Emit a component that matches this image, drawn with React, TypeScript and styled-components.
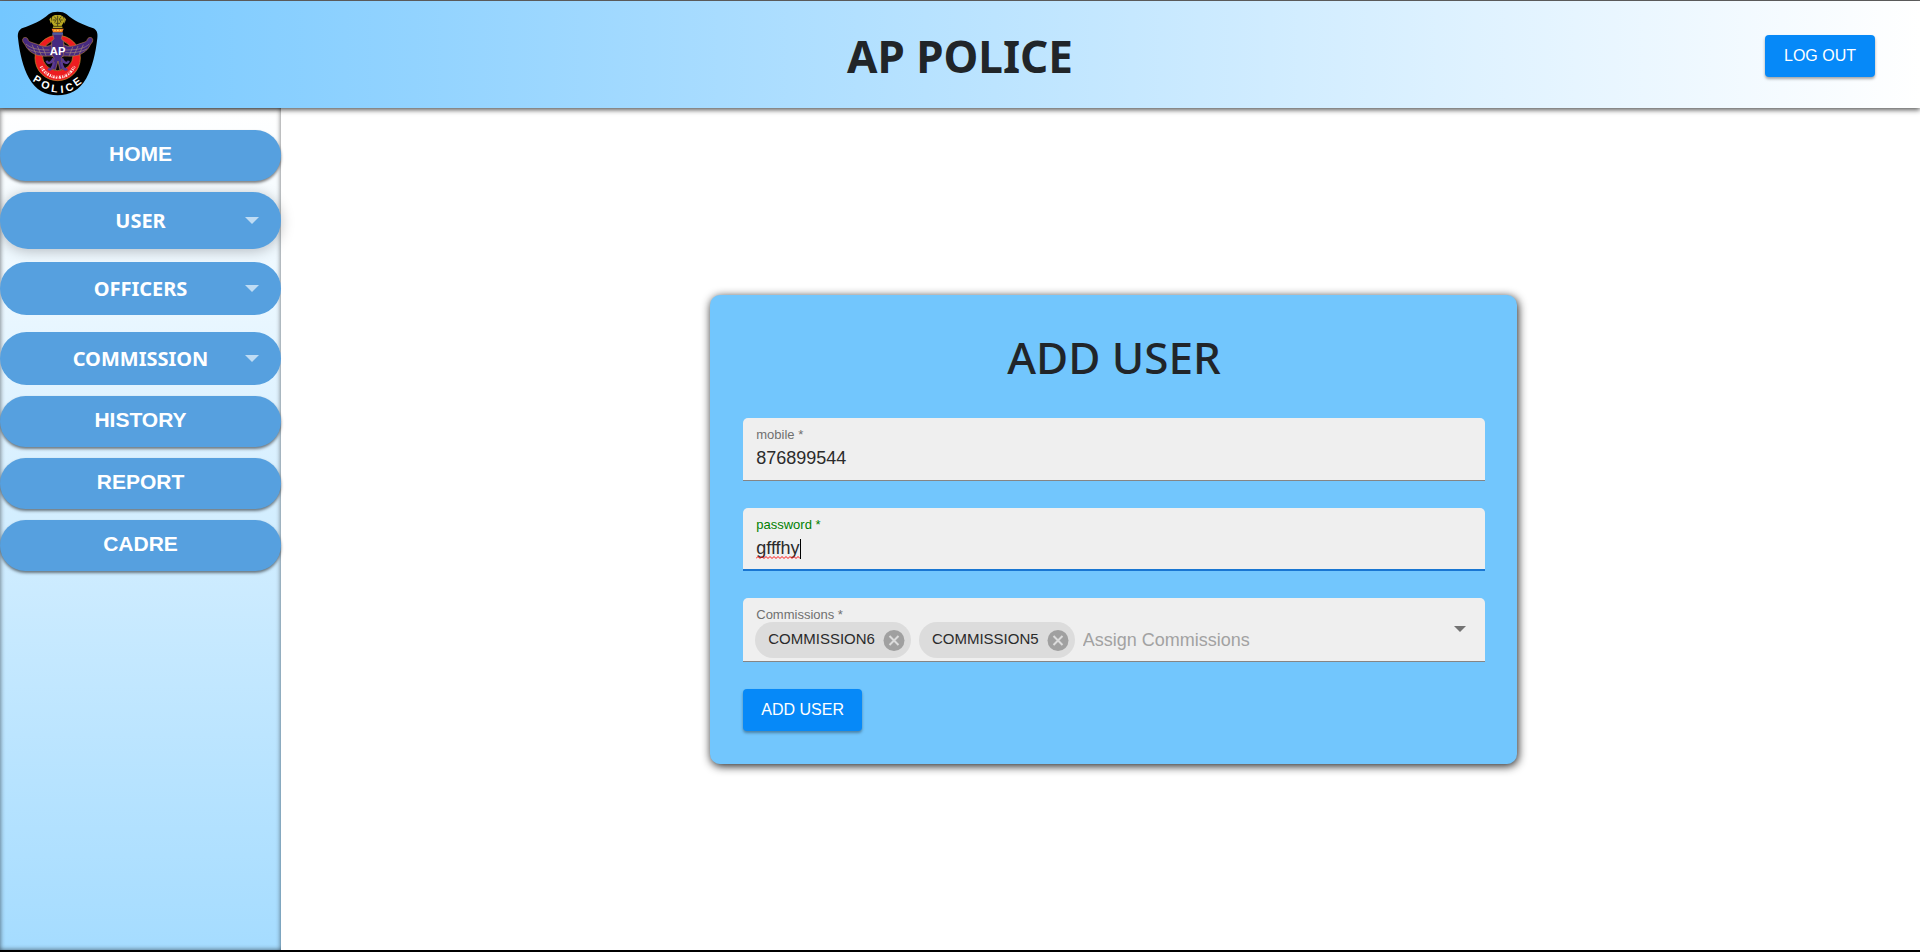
import React, { useState } from 'react';
import styled, { createGlobalStyle, css } from 'styled-components';

const GlobalStyle = createGlobalStyle`
  *, *::before, *::after { box-sizing: border-box; }
  body {
    margin: 0;
    background: #ffffff;
    color: #212529;
    font-family: "Liberation Sans", Arial, sans-serif;
  }
  button, input { font-family: inherit; }
`;

const humanist = '"Noto Sans", "Open Sans", sans-serif';

const Page = styled.div`
  display: flex;
  flex-direction: column;
  min-height: 100vh;
  border-top: 1px solid #666666;
  border-bottom: 2px solid #000000;
`;

const Header = styled.header`
  position: relative;
  z-index: 1;
  display: grid;
  grid-template-columns: 1fr auto 1fr;
  align-items: center;
  padding: 9px 17px 11px;
  background: linear-gradient(to right, #74c7ff, #ffffff);
  box-shadow: 0 2px 5px rgba(0, 0, 0, 0.65);
`;

const Logo = styled.svg`
  display: block;
  width: 82px;
  height: 87px;
`;

const Title = styled.h1`
  margin: 0;
  padding-top: 4px;
  font: 700 44px/54px ${humanist};
`;

const ActionButton = styled.button`
  align-self: flex-start;
  padding: 10px 18px;
  border: 0;
  border-radius: 4px;
  background: #0689f8;
  color: #ffffff;
  font-size: 16px;
  line-height: 22px;
  min-width: 110px;
  box-shadow: 0 2px 3px rgba(0, 0, 0, 0.35);
  cursor: pointer;
`;

const LogOut = styled.div`
  justify-self: end;
  padding: 4px 28px 0 0;
`;

const Body = styled.div`
  flex: 1;
  display: flex;
`;

const Sidebar = styled.nav`
  flex: none;
  width: 281px;
  padding-top: 22px;
  background: linear-gradient(to bottom, #ffffff, #a5dcff);
  box-shadow: inset 0 0 5px rgba(0, 0, 0, 0.6);
`;

const pill = css`
  display: block;
  width: 100%;
  border: 0;
  border-radius: 28px;
  background: #56a0df;
  color: #ffffff;
  text-align: center;
  text-decoration: none;
  cursor: pointer;
`;

const NavLink = styled.a`
  ${pill}
  margin-bottom: 11px;
  padding: 12px 0 15px;
  font-size: 21px;
  font-weight: 700;
  line-height: 24px;
  box-shadow: 0 2px 3px rgba(0, 0, 0, 0.5);
`;

const NavMenu = styled.button<{ $open?: boolean; $gap: number }>`
  ${pill}
  display: grid;
  grid-template-columns: 1fr auto 1fr;
  align-items: center;
  margin-bottom: ${(p) => p.$gap}px;
  padding: ${(p) => (p.$open ? 14 : 12)}px 22px;
  font: 700 20px/29px ${humanist};
  ${(p) => p.$open && 'box-shadow: 0 2px 14px rgba(0, 0, 0, 0.25);'}

  span { grid-column: 2; }
  svg { justify-self: end; }
`;

const Main = styled.main`
  flex: 1;
  display: flex;
  align-items: center;
  justify-content: center;
  padding-left: 26px;
`;

const Card = styled.form`
  display: flex;
  flex-direction: column;
  gap: 27px;
  width: 50%;
  padding: 33px 32px 33px 33px;
  border-radius: 10px;
  background: #72c6fd;
  box-shadow: 1px 2px 10px rgba(0, 0, 0, 0.9);
`;

const CardTitle = styled.h2`
  margin: 0;
  padding-bottom: 4px;
  font: 500 44px/59px ${humanist};
  text-align: center;
`;

const Field = styled.div<{ $focused?: boolean }>`
  display: flex;
  align-items: center;
  padding: 9px 13px ${(p) => (p.$focused ? 8 : 9)}px;
  border-bottom: ${(p) => (p.$focused ? '2px solid #1976d2' : '1px solid #858585')};
  border-radius: 5px 5px 0 0;
  background: #efefef;
`;

const TagField = styled(Field)`
  padding-bottom: 3px;
`;

const FieldBody = styled.div`
  flex: 1;
  position: relative;
`;

const Label = styled.label<{ $focused?: boolean }>`
  display: block;
  color: ${(p) => (p.$focused ? '#008000' : '#6f6f6f')};
  font-size: 13px;
  line-height: 16px;
`;

const TextInput = styled.input`
  display: block;
  width: 100%;
  height: 24px;
  margin-top: 4px;
  padding: 0;
  border: 0;
  outline: 0;
  background: transparent;
  color: #2b2b2b;
  font-size: 18px;

  &::placeholder { color: #a2a2a2; opacity: 1; }
`;

const EditMarks = styled.svg`
  position: absolute;
  left: 0;
  bottom: 0;
  width: 46px;
  height: 24px;
  pointer-events: none;
`;

const Tags = styled.div`
  display: flex;
  align-items: center;
  gap: 8px;
  margin: -1px 0 0 -1px;

  ${TextInput} { flex: 1; width: auto; min-width: 0; margin-top: 1px; }
`;

const Chip = styled.span`
  display: flex;
  align-items: center;
  gap: 8px;
  height: 36px;
  padding: 0 6px 0 13px;
  border-radius: 18px;
  background: #dcdcdc;
  color: #2b2b2b;
  font-size: 15px;
  line-height: 18px;

  span { padding-bottom: 2px; }
`;

const IconButton = styled.button`
  flex: none;
  display: block;
  padding: 0;
  border: 0;
  background: transparent;
  cursor: pointer;

  svg { display: block; }
`;

const MenuArrow = () => (
  <svg width="14" height="8" viewBox="0 0 14 8" aria-hidden="true">
    <path d="M0 0H14L7 7Z" fill="#bfdcf4" />
  </svg>
);

const wing =
  'M158 130C148 142 130 141 112 133C96 127 84 126 84 118C80 109 66 111 68 122C68 128 74 130 76 136C82 150 96 160 110 165C126 170 142 168 152 168L166 170V124Z';

const PoliceLogo = () => (
  <Logo viewBox="51 30 246 261" role="img" aria-label="AP Police emblem">
    <path
      d="M146 43C158 33 188 33 200 43C220 61 248 75 278 84C290 88 294 99 292 114C287 160 277 202 259 235C238 272 210 286 173 286C136 286 108 272 87 235C69 202 59 160 54 114C52 99 57 88 68 84C98 75 126 61 146 43Z"
      fill="#000000"
    />
    <circle cx="173" cy="174" r="68" fill="#ed1c20" stroke="#d0912d" strokeWidth="2" />
    <circle cx="173" cy="166" r="46" fill="#0a0508" stroke="#cf8a2c" strokeWidth="2" />
    <path d="M123 199C136 224 156 232 174 232C195 232 212 221 223 199" fill="none" stroke="#ffe9e4" strokeWidth="9" strokeDasharray="4 2 2 2 6 3" />
    <path d="M122 199C137 224 156 229 174 229C195 229 211 219 221 199" fill="none" stroke="#ed1c20" strokeWidth="3" strokeDasharray="3 4" />
    <g stroke="#b17a45" strokeWidth="2" fill="#46297f">
      <path d={wing} />
      <path d={wing} transform="translate(346 0) scale(-1 1)" />
      <path d="M158 103H188L184 116L191 124V164L184 174L188 206L180 211L174 183L166 211L157 206L162 174L155 164V124L162 116Z" />
    </g>
    <g stroke="#a58577" strokeWidth="2" fill="none">
      <path d="M78 132C92 145 112 150 148 150M84 146C102 156 122 159 150 158M96 134L108 162M112 138L124 166M128 141L138 167" />
      <path d="M268 132C254 145 234 150 198 150M262 146C244 156 224 159 196 158M250 134L238 162M234 138L222 166M218 141L208 167" />
    </g>
    <g stroke="#5b3b91" strokeWidth="7" fill="none">
      <path d="M160 175C156 190 142 193 140 182M162 186C159 204 152 212 144 207M186 175C190 190 204 193 206 182M184 186C187 204 194 212 202 207" />
    </g>
    <rect x="157" y="97" width="32" height="7" rx="2" fill="#4a57a5" />
    <path d="M155 86H191L187 97H159Z" fill="#f58220" />
    <g fill="#b9a822">
      <path d="M158 84L161 77L153 65L157 49L165 45H181L190 50L193 64L185 77L188 84Z" />
      <path d="M154 51L148 58L153 72ZM192 51L198 58L193 72Z" />
    </g>
    <path d="M163 50L169 57L164 68M184 50L178 57L183 68M173 47V79M160 79H187M158 60H165M181 60H188M167 70H180" fill="none" stroke="#4c4716" strokeWidth="3" />
    <path d="M163 91H167M171 91H176M180 91H184" stroke="#f9d54a" strokeWidth="4" />
    <text x="173" y="165" textAnchor="middle" fontFamily="Liberation Sans, Arial, sans-serif" fontSize="34" fontWeight="700" fill="#ffffff">
      AP
    </text>
    <text
      x="97 121 152 182 201 229"
      y="242 260 275 279 276 260"
      rotate="32 23 8 -4 -20 -35"
      fontFamily="Liberation Sans, Arial, sans-serif"
      fontSize="32"
      fontWeight="700"
      fill="#ffffff"
    >
      POLICE
    </text>
  </Logo>
);

const CommissionChip = ({ name, onRemove }: { name: string; onRemove: () => void }) => (
  <Chip>
    <span>{name}</span>
    <IconButton type="button" aria-label={`Remove ${name}`} onClick={onRemove}>
      <svg width="22" height="22" viewBox="0 0 22 22">
        <circle cx="11" cy="11.5" r="10.5" fill="#a0a0a0" />
        <path d="M6.5 7L15.5 16M15.5 7L6.5 16" stroke="#dcdcdc" strokeWidth="2" />
      </svg>
    </IconButton>
  </Chip>
);

export default function App() {
  const [mobile, setMobile] = useState('876899544');
  const [password, setPassword] = useState('gfffhy');
  const [commissions, setCommissions] = useState(['COMMISSION6', 'COMMISSION5']);

  return (
    <>
      <GlobalStyle />
      <Page>
        <Header>
          <PoliceLogo />
          <Title>AP POLICE</Title>
          <LogOut>
            <ActionButton type="button">LOG OUT</ActionButton>
          </LogOut>
        </Header>
        <Body>
          <Sidebar aria-label="Main">
            <NavLink href="#home">HOME</NavLink>
            <NavMenu type="button" $open $gap={13}><span>USER</span><MenuArrow /></NavMenu>
            <NavMenu type="button" $gap={17}><span>OFFICERS</span><MenuArrow /></NavMenu>
            <NavMenu type="button" $gap={11}><span>COMMISSION</span><MenuArrow /></NavMenu>
            <NavLink href="#history">HISTORY</NavLink>
            <NavLink href="#report">REPORT</NavLink>
            <NavLink href="#cadre">CADRE</NavLink>
          </Sidebar>
          <Main>
            <Card onSubmit={(e) => e.preventDefault()}>
              <CardTitle>ADD USER</CardTitle>
              <Field>
                <FieldBody>
                  <Label htmlFor="mobile">mobile *</Label>
                  <TextInput id="mobile" value={mobile} onChange={(e) => setMobile(e.target.value)} />
                </FieldBody>
              </Field>
              <Field $focused>
                <FieldBody>
                  <Label htmlFor="password" $focused>password *</Label>
                  <TextInput id="password" value={password} onChange={(e) => setPassword(e.target.value)} />
                  <EditMarks viewBox="0 0 46 24" aria-hidden="true">
                    <path
                      d="M0 21.5L2 19.5L4 21.5L6 19.5L8 21.5L10 19.5L12 21.5L14 19.5L16 21.5L18 19.5L20 21.5L22 19.5L24 21.5L26 19.5L28 21.5L30 19.5L32 21.5L34 19.5L36 21.5L38 19.5L40 21.5L42 19.5L44 21.5"
                      fill="none"
                      stroke="#ff1010"
                    />
                    <path d="M44.5 2V22" stroke="#000000" />
                  </EditMarks>
                </FieldBody>
              </Field>
              <TagField>
                <FieldBody>
                  <Label htmlFor="commissions">Commissions *</Label>
                  <Tags>
                    {commissions.map((name) => (
                      <CommissionChip
                        key={name}
                        name={name}
                        onRemove={() => setCommissions(commissions.filter((c) => c !== name))}
                      />
                    ))}
                    <TextInput id="commissions" role="combobox" aria-expanded={false} placeholder="Assign Commissions" />
                  </Tags>
                </FieldBody>
                <IconButton type="button" aria-label="Open commissions">
                  <svg width="22" height="22" viewBox="0 0 22 22">
                    <path d="M4 5H16L10 11Z" fill="#737373" />
                  </svg>
                </IconButton>
              </TagField>
              <ActionButton type="submit">ADD USER</ActionButton>
            </Card>
          </Main>
        </Body>
      </Page>
    </>
  );
}
